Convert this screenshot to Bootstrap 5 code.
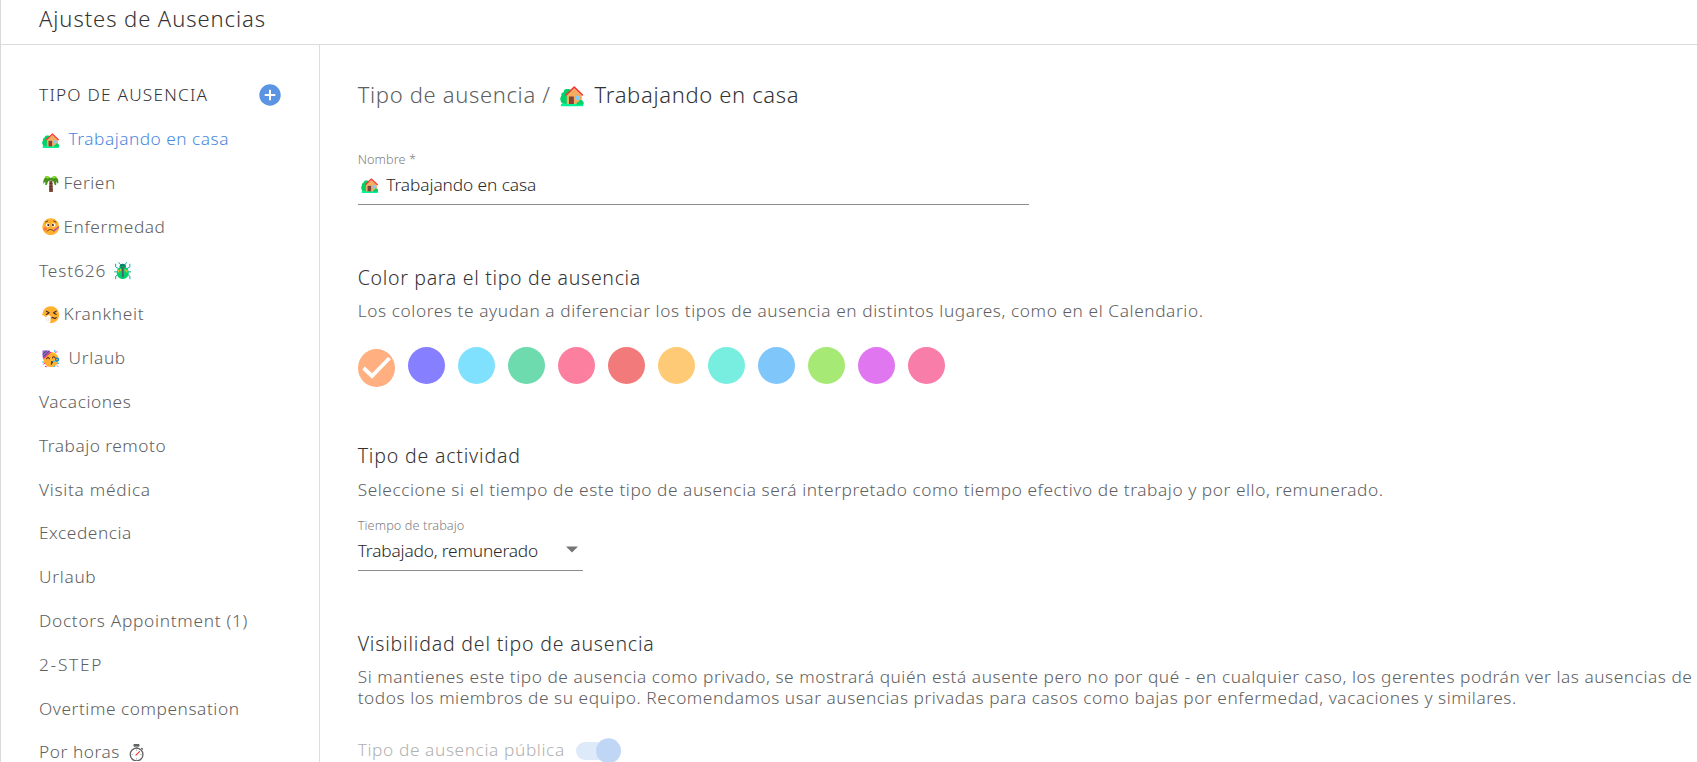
<!DOCTYPE html>
<html lang="es">
<head>
  <meta charset="UTF-8" />
  <meta name="viewport" content="width=device-width, initial-scale=1" />
  <title>Ajustes de Ausencias</title>
  <link href="https://cdn.jsdelivr.net/npm/bootstrap@5.3.3/dist/css/bootstrap.min.css" rel="stylesheet">
  <style>
    body {
      background-color: #fff;
      color: #606060;
      font-family: "Noto Sans", "Open Sans", sans-serif;
      font-weight: 350;
      font-size: 17.3px;
      letter-spacing: 0.55px;
    }

    .settings-page {
      height: 762px;
      border-left: 1px solid #d9d9d9;
    }

    .page-header {
      height: 45px;
      padding-left: 38px;
      border-bottom: 1px solid #dcdcdc;
    }

    .page-header h1 {
      font-size: 22px;
      font-weight: inherit;
      line-height: 36px;
      letter-spacing: 0.93px;
      color: #333;
    }

    /* Sidebar */
    .type-sidebar {
      width: 319px;
      padding: 28.4px 38px 0;
      border-right: 1px solid #dcdcdc;
    }

    .type-title,
    .type-item {
      height: 43.8px;
      line-height: 43.8px;
    }

    .type-title {
      font-size: 17.3px;
      font-weight: inherit;
      letter-spacing: 1.2px;
      color: #333;
    }

    .type-item {
      color: inherit;
      letter-spacing: 0.55px;
      text-decoration: none;
      white-space: nowrap;
    }

    .type-item.active { color: #4a88df; }
    .sp-tight { letter-spacing: 0.5px; }
    .sp-wide { letter-spacing: 0.7px; }
    .sp-wider { letter-spacing: 0.9px; }
    .sp-caps { letter-spacing: 1.75px; }

    .add-btn {
      width: 22px;
      height: 22px;
    }

    .emoji {
      width: 17.5px;
      height: 17.5px;
      margin: 1px 4px 0 3px;
    }

    .emoji-gap { margin-right: 9px; }
    .emoji-end { margin-left: 8px; }

    /* Main panel */
    .type-form {
      min-width: 0;
      padding: 29.5px 0 0 37.7px;
    }

    .crumb {
      font-size: 22px;
      font-weight: inherit;
      line-height: 39px;
      letter-spacing: 0.66px;
    }

    .crumb .emoji {
      width: 24px;
      height: 24px;
      margin: 1px 11px 0 9px;
    }

    .dark-text { color: #333; }

    .field-label {
      display: block;
      font-size: 12.7px;
      line-height: 18px;
      letter-spacing: 0.1px;
      color: #808080;
    }

    .field-value {
      height: 34px;
      margin-top: 3px;
      border-bottom: 1px solid #8c8c8c;
      line-height: 28px;
      letter-spacing: -0.08px;
      color: #2a2a2a;
    }

    .field-value .emoji {
      margin: 5px 8px 0 3px;
    }

    .name-field {
      width: 671px;
      margin-top: 36.5px;
    }

    .time-field {
      width: 225px;
      margin-top: 16.3px;
    }

    .time-field .field-value {
      letter-spacing: -0.16px;
    }

    .form-block { margin-top: 58.6px; }
    .swatches + .form-block,
    .block-activity { margin-top: 55.4px; }

    .section-title {
      font-size: 19.5px;
      font-weight: inherit;
      line-height: 28px;
      letter-spacing: 0.82px;
      color: #333;
    }

    .block-color .section-title { letter-spacing: 0.69px; }

    .section-text {
      margin: 8.4px 0 0;
      line-height: 21px;
      white-space: nowrap;
    }

    .block-color .section-text { letter-spacing: 0.58px; }
    .block-visibility .section-text { letter-spacing: 0.54px; }

    .swatches {
      height: 40px;
      gap: 13px;
      margin-top: 26px;
    }

    .swatch {
      width: 37px;
      height: 37px;
    }

    .swatch.selected {
      height: 38px;
      margin-top: 2px;
    }

    .toggle-row {
      height: 25px;
      margin-top: 30px;
      line-height: 23px;
      letter-spacing: 0.6px;
      color: #b0b0b0;
    }

    .toggle-switch {
      width: 46px;
      height: 26px;
      margin-left: 11px;
    }
  </style>
</head>
<body>

<!-- Emoji symbols -->
<svg class="d-none">
  <symbol id="house" viewBox="0 0 32 32">
    <path fill="#00d26a" d="M9 8c-3 0-4 2-4 4-3 1-4 3-3 5-2 2-2 5-1 7 0 2 2 4 5 4h8V9c-1-1-3-1-5-1z"/>
    <rect fill="#00f397" x="1" y="27.500" width="30" height="3.500" rx="1.700"/>
    <path fill="#f3ad61" d="M9 16 19 7l10 9v12H9z"/>
    <rect fill="#7d4533" x="12" y="18" width="6.500" height="10"/>
    <rect fill="#83cbff" x="21" y="17" width="5.500" height="5.500"/>
    <path fill="none" stroke="#f8312f" stroke-width="2" stroke-linecap="round" stroke-linejoin="round" d="M8 16 19 5.500l11 10.500"/>
    <path fill="#00d26a" d="M22 28c0-2 1-3 3-3 0-3 5-3 6 0 1 1 1 4-1 4h-7c-1 0-1 0-1-1z"/>
  </symbol>
  <symbol id="palm" viewBox="0 0 32 32">
    <path fill="#7d4533" d="M13.500 10h5.500l1 20c0 2-7 2-7 0z"/>
    <path fill="#5c3227" d="M13.400 15h5.700v1.500h-5.700zM13.200 20h6v1.500h-6zM13 25h6.500v1.500H13z"/>
    <path fill="#44911b" d="M16 6c-4-5-11-3-13 3-1 2-1 5 0 7l3-4 0 6c1 1 2 1 3 0l2-6 5-3 5 3 2 6c1 1 2 1 3 0v-6l3 4c2-3 1-7-1-10-3-4-9-4-12 0z"/>
    <path fill="#86d72f" d="M15 5C12 1 7 1 4 4c3 0 4 1 6 3 2-1 3-1 5-2zM17 5c3-4 8-4 11-1-3 0-4 1-6 3-2-1-3-1-5-2z"/>
  </symbol>
  <symbol id="sick" viewBox="0 0 32 32">
    <circle fill="#ffb02e" cx="16" cy="16" r="15.500"/>
    <circle fill="#ff7a3c" cx="6" cy="20" r="3.500"/>
    <circle fill="#fff" cx="10.500" cy="13" r="3.600"/>
    <circle fill="#fff" cx="21" cy="13" r="3.600"/>
    <circle fill="#402a32" cx="11.500" cy="13" r="2"/>
    <circle fill="#402a32" cx="20" cy="13" r="2"/>
    <path fill="none" stroke="#402a32" stroke-width="1.600" stroke-linecap="round" d="M6.500 7.500l4-2M25.500 7.500l-4-2M9.500 24c3-4 9-4 12 0"/>
    <path fill="none" stroke="#d3409c" stroke-width="2.600" stroke-linecap="round" d="M22 23l8-6"/>
    <path fill="none" stroke="#8d65c5" stroke-width="1.500" d="M25.500 20l4.500-3"/>
  </symbol>
  <symbol id="beetle" viewBox="0 0 32 32">
    <path fill="none" stroke="#00a6a0" stroke-width="1.700" stroke-linecap="round" stroke-linejoin="round" d="M12 5 9 1M20 5l3-4M8 12 3 9V4M24 12l5-3V4M6 18H1M26 18h5M7 23l-4 3v5M25 23l4 3v5"/>
    <path fill="#008463" d="M16 3c-4 0-6 3-6 6h12c0-3-2-6-6-6z"/>
    <path fill="#00d26a" d="M16 8C9 8 5 13 5 20c0 6 5 11 11 11s11-5 11-11c0-7-4-12-11-12z"/>
    <path fill="#44606c" d="M11 9h10l-3.500 3v16h-3V12z"/>
    <path fill="#f9c23c" d="M7.500 14h2v5h-2zM11 13h1.500v4H11zM22.500 14h2v5h-2zM19.500 13H21v4h-1.500z"/>
  </symbol>
  <symbol id="sneeze" viewBox="0 0 32 32">
    <circle fill="#ffb02e" cx="16" cy="16" r="15.500"/>
    <path fill="none" stroke="#402a32" stroke-width="2" stroke-linecap="round" stroke-linejoin="round" d="M8 9.500l5 3-5 3M26 9.500l-5 3 5 3M18 22c1.500-2 3-1 4 0s3 1 4-1"/>
    <path fill="#fff" d="M0 17c3-1 4 1 6 3 2 1 3-3 6-3 3 0 4 2 4 4l-1 9c-2 2-6 2-8 0-5-2-8-8-7-13z"/>
    <path fill="none" stroke="#d9d3df" stroke-width="1.200" d="M7 23l3 5M11 21l1 6"/>
  </symbol>
  <symbol id="party" viewBox="0 0 32 32">
    <circle fill="#ffb02e" cx="16.500" cy="17.500" r="13.800"/>
    <path fill="#8d65c5" d="M1 1h13l1 3L3 15 1 13z"/>
    <path fill="none" stroke="#533566" stroke-width="1.500" d="M1 8l7-7M2 13 13 2"/>
    <path fill="none" stroke="#f70a8d" stroke-width="1.800" stroke-linecap="round" d="M3 15.500 16 4M3 26l2-2M25 5l2-2M6 30l2 .5M28 29l1 1"/>
    <path fill="none" stroke="#402a32" stroke-width="1.900" stroke-linecap="round" d="M8.500 16c1-3 4-3 5 0M19 14.500c1-3 4-3 5 0"/>
    <path fill="#402a32" d="M17 20h3v4h-2v3h-2z"/>
    <path fill="none" stroke="#26c9fc" stroke-width="2.200" stroke-linecap="round" d="M20 21l9-2M23 1l1 2M2 21v2M28 25l2-1M22 30h1"/>
    <circle fill="none" stroke="#0084ce" stroke-width="2.200" cx="27.500" cy="17.500" r="2.800"/>
  </symbol>
  <symbol id="stopwatch" viewBox="0 0 32 32">
    <rect fill="#636363" x="10" y="0" width="11" height="5" rx="1.500"/>
    <rect fill="#9b9b9b" x="14" y="4" width="3.500" height="4"/>
    <path stroke="#636363" stroke-width="2.500" d="M24.500 7.500l2.500 2.500"/>
    <circle fill="#fff" stroke="#636363" stroke-width="2.400" cx="15.700" cy="19.200" r="11.600"/>
    <path stroke="#8a8a8a" stroke-width="1.300" d="M15.700 10v2.500M15.700 26v2.500M6.500 19.200H9M22.500 19.200H25"/>
    <path stroke="#f8312f" stroke-width="2.100" stroke-linecap="round" d="M14.500 20.500l6.500-6.500"/>
  </symbol>
</svg>

<div class="settings-page d-flex flex-column overflow-hidden">

  <!-- Header -->
  <header class="page-header flex-shrink-0">
    <h1 class="m-0">Ajustes de Ausencias</h1>
  </header>

  <div class="d-flex flex-grow-1">

    <!-- Absence types -->
    <nav class="type-sidebar d-flex flex-column flex-shrink-0">
      <div class="d-flex justify-content-between align-items-center">
        <h2 class="type-title m-0">TIPO DE AUSENCIA</h2>
        <svg class="add-btn" viewBox="0 0 22 22">
          <circle cx="11" cy="11" r="10.700" fill="#5b94e3"/>
          <path d="M11 5.700v10.600M5.700 11h10.600" stroke="#fff" stroke-width="2"/>
        </svg>
      </div>
      <a href="#" class="type-item active sp-tight d-flex align-items-center"><svg class="emoji emoji-gap"><use href="#house"/></svg>Trabajando en casa</a>
      <a href="#" class="type-item d-flex align-items-center"><svg class="emoji"><use href="#palm"/></svg>Ferien</a>
      <a href="#" class="type-item d-flex align-items-center"><svg class="emoji"><use href="#sick"/></svg>Enfermedad</a>
      <a href="#" class="type-item sp-wider d-flex align-items-center">Test626<svg class="emoji emoji-end"><use href="#beetle"/></svg></a>
      <a href="#" class="type-item sp-wide d-flex align-items-center"><svg class="emoji"><use href="#sneeze"/></svg>Krankheit</a>
      <a href="#" class="type-item sp-wide d-flex align-items-center"><svg class="emoji emoji-gap"><use href="#party"/></svg>Urlaub</a>
      <a href="#" class="type-item">Vacaciones</a>
      <a href="#" class="type-item sp-tight">Trabajo remoto</a>
      <a href="#" class="type-item sp-wide">Visita médica</a>
      <a href="#" class="type-item">Excedencia</a>
      <a href="#" class="type-item sp-wide">Urlaub</a>
      <a href="#" class="type-item sp-wide">Doctors Appointment (1)</a>
      <a href="#" class="type-item sp-caps">2-STEP</a>
      <a href="#" class="type-item">Overtime compensation</a>
      <a href="#" class="type-item d-flex align-items-center">Por horas<svg class="emoji emoji-end"><use href="#stopwatch"/></svg></a>
    </nav>

    <!-- Type form -->
    <main class="type-form flex-grow-1">
      <h2 class="crumb d-flex align-items-center m-0">
        <span>Tipo de ausencia /</span>
        <svg class="emoji"><use href="#house"/></svg>
        <span class="dark-text">Trabajando en casa</span>
      </h2>

      <div class="name-field">
        <span class="field-label">Nombre *</span>
        <div class="field-value d-flex align-items-start">
          <svg class="emoji"><use href="#house"/></svg>
          <span>Trabajando en casa</span>
        </div>
      </div>

      <section class="form-block block-color">
        <h3 class="section-title m-0">Color para el tipo de ausencia</h3>
        <p class="section-text">Los colores te ayudan a diferenciar los tipos de ausencia en distintos lugares, como en el Calendario.</p>
        <div class="swatches d-flex" id="swatches"></div>
      </section>

      <section class="block-activity">
        <h3 class="section-title m-0">Tipo de actividad</h3>
        <p class="section-text">Seleccione si el tiempo de este tipo de ausencia será interpretado como tiempo efectivo de trabajo y por ello, remunerado.</p>
        <div class="time-field">
          <span class="field-label">Tiempo de trabajo</span>
          <div class="field-value d-flex justify-content-between">
            <span>Trabajado, remunerado</span>
            <svg width="17" height="20" viewBox="0 0 17 20"><path d="M0 9.500h12L6 15.500z" fill="#757575"/></svg>
          </div>
        </div>
      </section>

      <section class="form-block block-visibility">
        <h3 class="section-title m-0">Visibilidad del tipo de ausencia</h3>
        <p class="section-text">Si mantienes este tipo de ausencia como privado, se mostrará quién está ausente pero no por qué - en cualquier caso, los gerentes podrán ver las ausencias de<br>todos los miembros de su equipo. Recomendamos usar ausencias privadas para casos como bajas por enfermedad, vacaciones y similares.</p>
        <div class="toggle-row d-flex">
          <span>Tipo de ausencia pública</span>
          <svg class="toggle-switch" viewBox="0 0 46 26">
            <rect x="0" y="4" width="42" height="18" rx="9" fill="#dee9fa"/>
            <circle cx="32.500" cy="12.800" r="12.500" fill="#c0d6f5"/>
          </svg>
        </div>
      </section>
    </main>
  </div>
</div>

<!-- Bootstrap JS -->
<script src="https://cdn.jsdelivr.net/npm/bootstrap@5.3.3/dist/js/bootstrap.bundle.min.js"></script>

<!-- Color swatches -->
<script>
  const colors = ["#ffaf80", "#867fff", "#80e1ff", "#6edbae", "#fd7f9f", "#f37a7a", "#ffca75", "#78eee0", "#7fc6fb", "#a6e974", "#e077f1", "#f87da9"];
  const check = '<svg width="37" height="38" viewBox="0 0 37 38"><path d="M5.500 19l8.500 8 17.500-18" fill="none" stroke="#fff" stroke-width="3.800"/></svg>';

  colors.forEach(function(color, i) {
    const dot = document.createElement('div');
    dot.className = 'swatch rounded-circle d-flex';
    dot.style.backgroundColor = color;
    if (i === 0) {
      dot.classList.add('selected');
      dot.innerHTML = check;
    }
    document.getElementById('swatches').appendChild(dot);
  });
</script>

</body>
</html>
